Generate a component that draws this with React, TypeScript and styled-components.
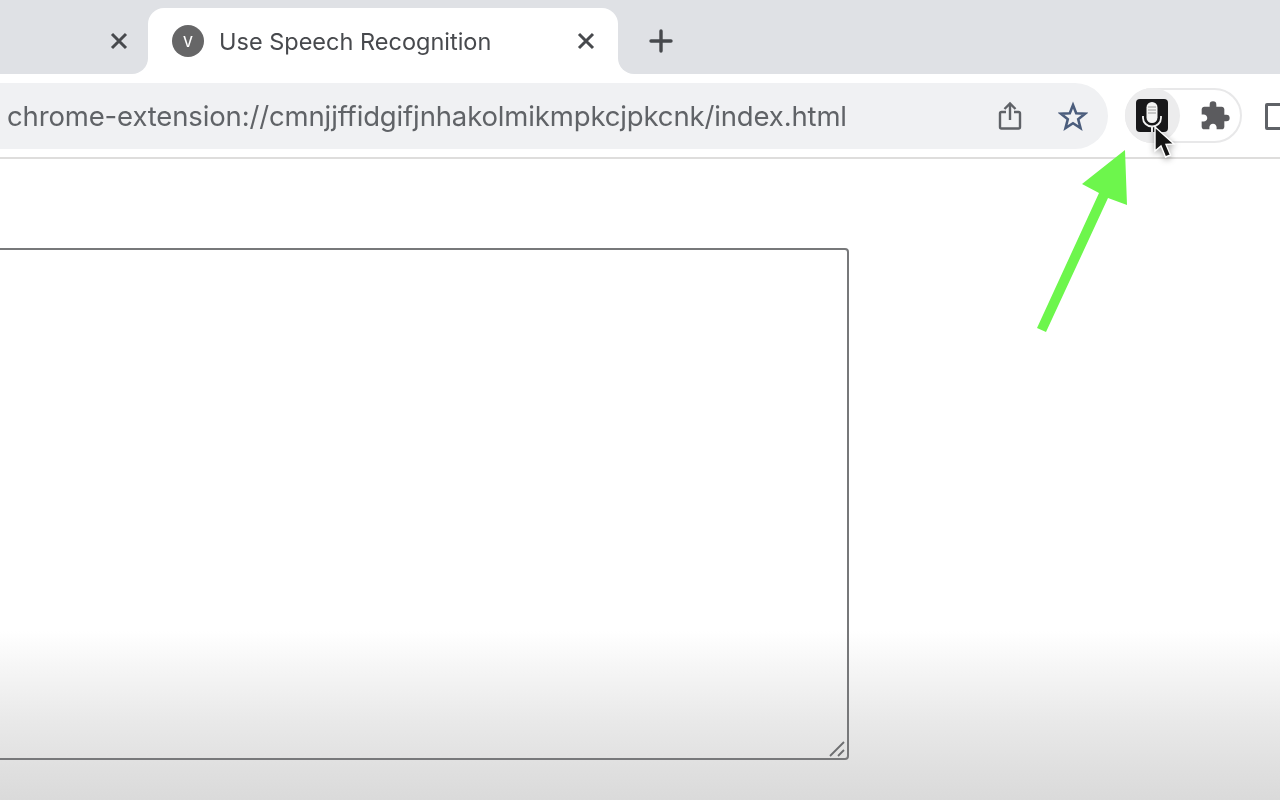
import React from "react";
import styled, { createGlobalStyle } from "styled-components";
import { MdExtension } from "react-icons/md";

const GlobalStyle = createGlobalStyle`
  html, body { margin: 0; padding: 0; background: #fff; }
  * { box-sizing: border-box; }
`;

const Screen = styled.div`
  position: relative;
  width: 1280px;
  height: 800px;
  overflow: hidden;
  display: flex;
  flex-direction: column;
  font-family: Inter, "Liberation Sans", sans-serif;
`;

const Browser = styled.div`
  display: flex;
  flex-direction: column;
  height: 100%;
  filter: blur(0.45px);
`;

const TabStrip = styled.div`
  display: flex;
  flex: none;
  height: 74px;
  background: #fff;
`;

const StripEnd = styled.div<{ $side: "left" | "right" }>`
  display: flex;
  align-items: center;
  background: #dfe1e5;
  padding-top: 8px;
  ${(p) =>
    p.$side === "left"
      ? `width: 148px; justify-content: flex-end; padding-right: 20px; border-bottom-right-radius: 16px;`
      : `flex: 1; padding-left: 31px; border-bottom-left-radius: 16px;`}
`;

const TabSlot = styled.div`
  width: 470px;
  padding-top: 8px;
  background: #dfe1e5;
`;

const ActiveTab = styled.div`
  display: flex;
  align-items: center;
  height: 66px;
  padding: 0 23px 0 24px;
  background: #fff;
  border-radius: 16px 16px 0 0;
`;

const Favicon = styled.div`
  display: flex;
  flex: none;
  align-items: center;
  justify-content: center;
  width: 32px;
  height: 32px;
  border-radius: 50%;
  background: #666667;
  color: #fff;
  font-size: 14px;
  font-weight: 500;
`;

const TabTitle = styled.span`
  margin-left: 15px;
  margin-right: auto;
  font-size: 23.5px;
  color: #47494d;
  white-space: nowrap;
`;

const Toolbar = styled.div`
  display: flex;
  flex: none;
  align-items: flex-start;
  height: 85px;
  padding-top: 9px;
  background: #fff;
  border-bottom: 2px solid #dedddc;
  overflow: hidden;
`;

const Omnibox = styled.div`
  display: flex;
  flex: none;
  align-items: center;
  width: 1108px;
  height: 66px;
  padding: 0 20px 0 7px;
  background: #f0f1f3;
  border-radius: 0 33px 33px 0;
`;

const Url = styled.span`
  margin-right: auto;
  font-size: 27.5px;
  letter-spacing: -0.145px;
  color: #606367;
  white-space: nowrap;
`;

const OmniIcon = styled.svg<{ $gap?: number }>`
  display: block;
  flex: none;
  margin-left: ${(p) => p.$gap ?? 0}px;
`;

const ExtensionPill = styled.div`
  display: flex;
  flex: none;
  align-items: center;
  width: 117px;
  height: 55px;
  margin: 5px 0 0 17px;
  border: 2px solid #e8e8e9;
  border-radius: 28px;
`;

const ActiveExtension = styled.div`
  display: flex;
  flex: none;
  align-items: center;
  justify-content: center;
  width: 55px;
  height: 55px;
  margin-left: -2px;
  padding-right: 2px;
  border-radius: 50%;
  background: #ececed;
`;

const PuzzleSlot = styled.div`
  display: flex;
  margin-left: 19px;
  color: #5b5b5e;
`;

const SidePanel = styled.div`
  flex: none;
  width: 40px;
  height: 27px;
  margin: 20px 0 0 23px;
  border: 3px solid #5f6267;
  border-radius: 2px;
`;

const Page = styled.div`
  flex: 1;
  padding-top: 89px;
  background: linear-gradient(
    to bottom,
    #fff 472px,
    #f5f5f5 512px,
    #e9e9e9 562px,
    #dfdfdf 612px,
    #dadada 641px
  );
`;

const NoteWrap = styled.div`
  position: relative;
  width: 869px;
  height: 512px;
  margin-left: -20px;
`;

const Note = styled.textarea`
  display: block;
  width: 100%;
  height: 100%;
  resize: none;
  outline: none;
  background: transparent;
  border: 2px solid #77787a;
  border-radius: 4px;
`;

const Grip = styled.svg`
  position: absolute;
  right: 2px;
  bottom: 2px;
`;

const Cursor = styled.svg`
  position: absolute;
  left: 1150px;
  top: 124px;
  filter: drop-shadow(0 2px 3px rgba(0, 0, 0, 0.35)) blur(0.4px);
`;

const GreenArrow = styled.svg`
  position: absolute;
  left: 1030px;
  top: 145px;
`;

const CloseIcon = () => (
  <svg width="18" height="18" viewBox="0 0 18 18" fill="none" stroke="#47494d" strokeWidth="3">
    <path d="M2 2 L16 16 M16 2 L2 16" />
  </svg>
);

const ShareIcon = () => (
  <OmniIcon width="24" height="30" viewBox="0 0 24 30" fill="none" stroke="#5f6267" strokeWidth="2.4">
    <path d="M8 11 H3.5 a1.5 1.5 0 0 0 -1.5 1.5 V26 a1.5 1.5 0 0 0 1.5 1.5 H20.5 a1.5 1.5 0 0 0 1.5 -1.5 V12.5 a1.5 1.5 0 0 0 -1.5 -1.5 H16" />
    <path d="M12 19 V3 M6.5 8 L12 2.5 L17.5 8" />
  </OmniIcon>
);

const StarIcon = () => (
  <OmniIcon
    $gap={36}
    width="30"
    height="30"
    viewBox="0 0 30 30"
    fill="none"
    stroke="#4b5d7c"
    strokeWidth="2.6"
    strokeLinejoin="miter"
  >
    <path d="M15 4 L18.2 12.2 L27 12.7 L20.2 18.3 L22.5 27 L15 22.2 L7.5 27 L9.8 18.3 L3 12.7 L11.8 12.2 Z" />
  </OmniIcon>
);

const MicBadge = () => (
  <svg width="32" height="33" viewBox="0 0 32 33">
    <rect width="32" height="33" rx="4" fill="#18181a" />
    <rect x="10.5" y="3" width="11" height="21" rx="5.5" fill="#f4f4f4" />
    <path d="M12 8 H20 M12 11 H20 M12 14 H20" stroke="#9a9a9a" strokeWidth="1" />
    <path d="M7 17 V19 a9 8.5 0 0 0 18 0 V17" fill="none" stroke="#f4f4f4" strokeWidth="1.8" />
    <path d="M16 27 V33" stroke="#f4f4f4" strokeWidth="2" />
  </svg>
);

export default function App() {
  return (
    <Screen>
      <GlobalStyle />
      <Browser>
        <TabStrip>
          <StripEnd $side="left">
            <CloseIcon />
          </StripEnd>
          <TabSlot>
            <ActiveTab>
              <Favicon>V</Favicon>
              <TabTitle>Use Speech Recognition</TabTitle>
              <CloseIcon />
            </ActiveTab>
          </TabSlot>
          <StripEnd $side="right">
            <svg width="24" height="24" viewBox="0 0 24 24" stroke="#47494d" strokeWidth="3.4" strokeLinecap="round">
              <path d="M12 2 V22 M2 12 H22" />
            </svg>
          </StripEnd>
        </TabStrip>
        <Toolbar>
          <Omnibox>
            <Url>chrome-extension://cmnjjffidgifjnhakolmikmpkcjpkcnk/index.html</Url>
            <ShareIcon />
            <StarIcon />
          </Omnibox>
          <ExtensionPill>
            <ActiveExtension>
              <MicBadge />
            </ActiveExtension>
            <PuzzleSlot>
              <MdExtension size={32} />
            </PuzzleSlot>
          </ExtensionPill>
          <SidePanel />
        </Toolbar>
        <Page>
          <NoteWrap>
            <Note aria-label="Speech text" />
            <Grip width="18" height="18" viewBox="0 0 18 18" fill="none" stroke="#6d6e70" strokeWidth="1.8">
              <path d="M1 16 L15 2 M9 16 L15 10" />
            </Grip>
          </NoteWrap>
        </Page>
      </Browser>
      <Cursor width="30" height="38" viewBox="0 0 30 38">
        <path d="M5 3 L5 27 L11 22 L15.5 33 L20.5 31 L16 20.5 L24 20 Z" fill="#151515" stroke="#fff" strokeWidth="1.4" />
      </Cursor>
      <GreenArrow width="110" height="195" viewBox="0 0 110 195">
        <path d="M95 5 L97 60 L78 53 L16 187 L7 183 L69 48 L52 39 Z" fill="#6df64c" />
      </GreenArrow>
    </Screen>
  );
}
